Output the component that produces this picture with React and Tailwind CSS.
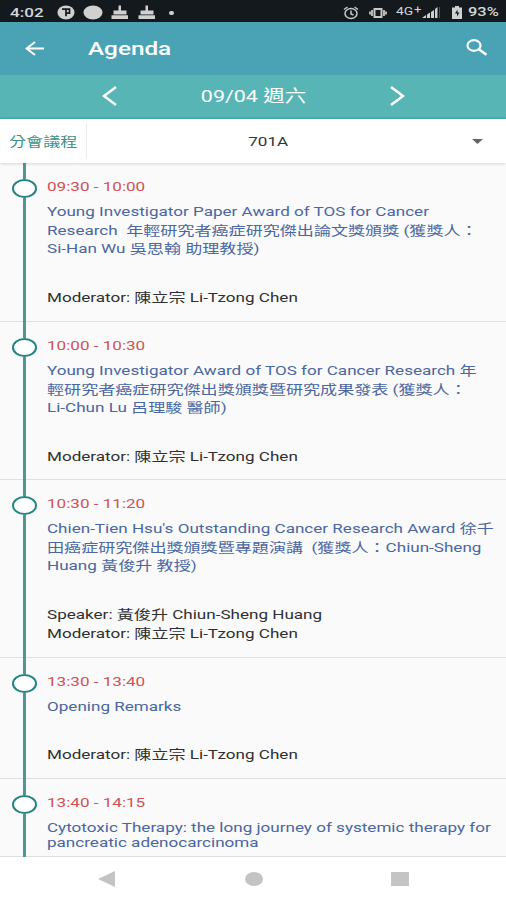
import React from 'react';
import clsx from 'clsx';

const SESSIONS = [
    {
        time: '09:30 - 10:00',
        title: [
            'Young Investigator Paper Award of TOS for Cancer',
            'Research  年輕研究者癌症研究傑出論文獎頒獎 (獲獎人：',
            'Si-Han Wu 吳思翰 助理教授)',
        ],
        people: ['Moderator: 陳立宗 Li-Tzong Chen'],
        height: 'h-[159px]',
    },
    {
        time: '10:00 - 10:30',
        title: [
            'Young Investigator Award of TOS for Cancer Research 年',
            '輕研究者癌症研究傑出獎頒獎暨研究成果發表 (獲獎人：',
            'Li-Chun Lu 呂理駿 醫師)',
        ],
        people: ['Moderator: 陳立宗 Li-Tzong Chen'],
        height: 'h-[158px]',
    },
    {
        time: '10:30 - 11:20',
        title: [
            "Chien-Tien Hsu's Outstanding Cancer Research Award 徐千",
            '田癌症研究傑出獎頒獎暨專題演講  (獲獎人：Chiun-Sheng',
            'Huang 黃俊升 教授)',
        ],
        people: ['Speaker: 黃俊升 Chiun-Sheng Huang', 'Moderator: 陳立宗 Li-Tzong Chen'],
        height: 'h-[178px]',
    },
    {
        time: '13:30 - 13:40',
        title: ['Opening Remarks'],
        people: ['Moderator: 陳立宗 Li-Tzong Chen'],
        height: 'h-[121px]',
    },
    {
        time: '13:40 - 14:15',
        title: ['Cytotoxic Therapy: the long journey of systemic therapy for', 'pancreatic adenocarcinoma'],
        people: [],
        height: 'h-[78px]',
        compact: true,
    },
];

// One line of wide-set text
const Line = ({ children, className }) => (
    <div className={clsx('w-max origin-left scale-x-[1.313] whitespace-pre', className)}>{children}</div>
);

const StatusBar = () => (
    <div className="flex h-[22px] shrink-0 items-center bg-[#14191e] pt-[3px] text-[#d6d6d6]">
        <Line className="ml-[10px] text-[13px] leading-none font-medium">4:02</Line>
        <svg className="ml-[21px] h-[15px] w-[112px]" viewBox="0 0 112 15" fill="#d0d0d0">
            <ellipse cx="9" cy="7.5" rx="8.5" ry="7" />
            <path d="M5 4.2h4v7M9 4.2h3.5v4H9" fill="none" stroke="#14191e" strokeWidth="1.7" />
            <ellipse cx="36" cy="7.5" rx="9.5" ry="7" />
            <path d="M61.5 0.5h2.500v5h5.500v4h-13v-4h5zM54.500 10.300h16.500v3.700H54.500z" />
            <path d="M88.500 0.5h2.500v5h5.500v4h-13v-4h5zM81.500 10.300h16.500v3.700H81.500z" />
        </svg>
        <div className="h-1 w-[5px] rounded-full bg-[#d0d0d0]" />
        <div className="flex-1" />
        <svg className="h-[14px] w-[45px]" viewBox="0 0 45 14" fill="none" stroke="#c8c8c8" strokeWidth="1.500">
            <ellipse cx="8" cy="7.500" rx="6" ry="5" />
            <path d="M8 4.500v3.500l2.500 1M1 3.500L4.500 1M15 3.500L11.500 1" />
            <path d="M31.500 3h7v8h-7z" strokeWidth="2" />
            <path d="M29 4v6M41 4v6M27 5.500v3M43 5.500v3" strokeWidth="1.800" />
        </svg>
        <div className="ml-[8px] flex w-[26px] text-[10.500px] leading-none">
            <Line>4G</Line>
            <Line className="-mt-[2px] ml-[5px] text-[10px]">+</Line>
        </div>
        <svg className="h-[13px] w-[19px]" viewBox="0 0 19 13" fill="#d0d0d0">
            <path d="M0 12l4-3v3zM5 8.500l3-2V12H5zM9 6l3-2v8H9zM13 3l2.500-2v11H13z" />
            <path d="M17 1h1v11h-1z" fill="#4a4e52" />
        </svg>
        <svg className="ml-[11px] h-[13px] w-[10px]" viewBox="0 0 10 13">
            <path d="M3 0h4v1.500h3V13H0V1.500h3z" fill="#d0d0d0" />
            <path d="M5.500 3.500L3 7.500h2v3l2.500-4h-2z" fill="#14191e" />
        </svg>
        <Line className="mr-[15px] ml-[6px] w-[24px] text-[12.500px] leading-none font-medium">93%</Line>
    </div>
);

const Header = () => (
    <div className="flex h-[53px] shrink-0 items-center bg-[#4aa3b5] text-white">
        <svg className="ml-[25px] h-[15px] w-[20px]" viewBox="0 0 20 15" fill="none" stroke="white" strokeWidth="1.900">
            <path d="M19 7.500H2M10 1L1.500 7.500L10 14" />
        </svg>
        <Line className="ml-[43px] pt-[1px] text-[18.500px] leading-none font-medium">Agenda</Line>
        <div className="flex-1" />
        <svg className="mr-[18px] mb-[2px] h-[17px] w-[22px]" viewBox="0 0 22 17" fill="none" stroke="white">
            <ellipse cx="8" cy="6.500" rx="6.500" ry="5.300" strokeWidth="2.200" />
            <path d="M12.500 10L20.500 15.800" strokeWidth="2.600" />
        </svg>
    </div>
);

const DateBar = () => (
    <div className="flex h-[44px] shrink-0 items-center border-b-2 border-[#48adae] bg-[#58b5b5] text-white">
        <svg className="ml-[102px] h-[20px] w-[15px]" viewBox="0 0 15 20" fill="none" stroke="white" strokeWidth="2.500">
            <path d="M14 1L2 10L14 19" />
        </svg>
        <div className="flex flex-1 justify-center">
            <div className="w-max scale-x-[1.3] pt-[2px] text-[16.500px] leading-none">09/04 週六</div>
        </div>
        <svg className="mr-[101px] h-[20px] w-[15px]" viewBox="0 0 15 20" fill="none" stroke="white" strokeWidth="2.500">
            <path d="M1 1L13 10L1 19" />
        </svg>
    </div>
);

const RoomFilter = () => (
    <div className="z-10 flex h-[44px] shrink-0 items-center bg-white shadow-[0_1px_3px_rgba(0,0,0,0.14)]">
        <div className="flex h-[36px] w-[87px] items-center border-r border-[#ececec]">
            <Line className="ml-[9px] text-[13px] leading-none text-[#3d9187]">分會議程</Line>
        </div>
        <div className="flex flex-1 justify-center pr-[22px]">
            <div className="w-max scale-x-[1.313] text-[13px] leading-none text-[#333]">701A</div>
        </div>
        <svg className="mr-[23px] h-[5px] w-[11px]" viewBox="0 0 11 5" fill="#666">
            <path d="M0 0h11L5.500 5z" />
        </svg>
    </div>
);

const Session = ({ session }) => (
    <div className={clsx('flex shrink-0 border-b border-[#dfdfdf] pl-[12px]', session.height)}>
        {/* Timeline */}
        <div className="-mb-px flex w-[25px] flex-col items-center">
            <div className="h-[16px] w-[3px] bg-[#4d9796]" />
            <div className="h-[19px] w-[25px] rounded-[50%] border-x-[2.500px] border-y-2 border-[#268582] bg-white" />
            <div className="w-[3px] flex-1 bg-[#4d9796]" />
        </div>

        <div className="ml-[10px] pt-[14px] text-[13px]">
            <Line className="leading-[19px] text-[#cf5258]">{session.time}</Line>
            <div className={clsx('text-[#4a67a0]', session.compact ? 'pt-[8px] leading-[15px]' : 'pt-[7px] leading-[18.700px]')}>
                {session.title.map((line) => (
                    <Line key={line}>{line}</Line>
                ))}
            </div>
            <div className="pt-[28.500px] leading-[19px] text-[#303030]">
                {session.people.map((line) => (
                    <Line key={line}>{line}</Line>
                ))}
            </div>
        </div>
    </div>
);

const NavBar = () => (
    <div className="flex h-[43px] shrink-0 items-center bg-white pr-[97px] pl-[98px]">
        <svg className="h-[16px] w-[17px]" viewBox="0 0 17 16" fill="#c4c4c4">
            <path d="M17 0v16L0 8z" />
        </svg>
        <div className="flex flex-1 justify-center">
            <div className="ml-[1px] h-[14px] w-[18px] rounded-[50%] bg-[#c4c4c4]" />
        </div>
        <div className="h-[14px] w-[18px] bg-[#c4c4c4]" />
    </div>
);

const App = () => (
    <div className="flex h-[900px] w-[506px] flex-col overflow-hidden bg-[#fafafa] font-['Roboto','Noto_Sans_CJK_TC',sans-serif]">
        <StatusBar />
        <Header />
        <DateBar />
        <RoomFilter />
        <div className="flex h-[694px] shrink-0 flex-col overflow-hidden">
            {SESSIONS.map((session) => (
                <Session key={session.time} session={session} />
            ))}
        </div>
        <NavBar />
    </div>
);

export default App;
